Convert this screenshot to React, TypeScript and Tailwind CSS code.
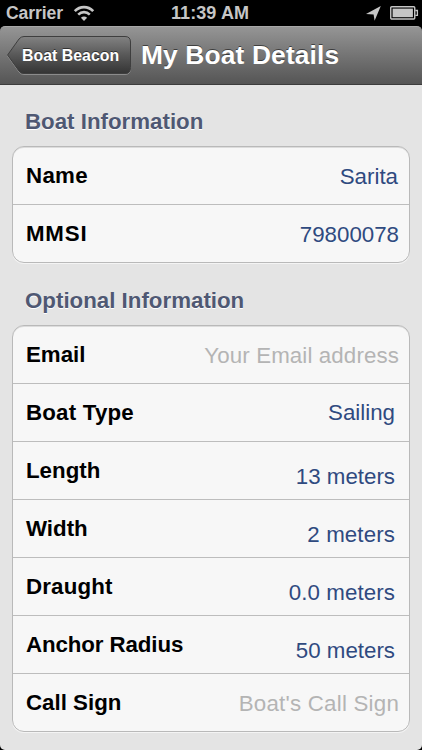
import React from 'react';
import { clsx } from 'clsx';

type Row = {
  label: string;
  value?: string;
  placeholder?: string;
  // spacing of the value and label inside their cell
  valueClass?: string;
  labelClass?: string;
};

const BOAT_ROWS: Row[] = [
  { label: 'Name', value: 'Sarita', valueClass: 'pr-[11px] pt-0.5', labelClass: 'tracking-[0.3px]' },
  { label: 'MMSI', value: '79800078', valueClass: 'pr-[10px] pt-0.5', labelClass: 'tracking-[0.8px]' },
];

const OPTIONAL_ROWS: Row[] = [
  { label: 'Email', placeholder: 'Your Email address', valueClass: 'pr-[10px] pt-0.5 tracking-[0.12px]' },
  { label: 'Boat Type', value: 'Sailing', valueClass: 'pr-[14px]', labelClass: 'tracking-[0.2px]' },
  { label: 'Length', value: '13 meters', valueClass: 'pr-[14px] pt-3' },
  { label: 'Width', value: '2 meters', valueClass: 'pr-[14px] pt-3 tracking-[0.12px]' },
  { label: 'Draught', value: '0.0 meters', valueClass: 'pr-[14px] pt-3 tracking-[0.1px]', labelClass: 'tracking-[0.15px]' },
  { label: 'Anchor Radius', value: '50 meters', valueClass: 'pr-[14px] pt-3', labelClass: 'tracking-[-0.1px]' },
  { label: 'Call Sign', placeholder: "Boat's Call Sign", valueClass: 'pr-[10px] pt-0.5 tracking-[0.22px]' },
];

function WifiIcon() {
  return (
    <svg width="22" height="17" viewBox="0 0 22 17" fill="none" stroke="#c6c6c6">
      <path d="M1.8 6.1 C7 0.7 15 0.7 20.2 6.1" strokeWidth="2.7" />
      <path d="M5.2 9.7 C8.6 6.3 13.4 6.3 16.8 9.7" strokeWidth="2.6" />
      <path d="M11 16 L7.9 12.7 C9.7 11 12.3 11 14.1 12.7 Z" fill="#c6c6c6" stroke="none" />
    </svg>
  );
}

function LocationIcon() {
  return (
    <svg width="15" height="15" viewBox="0 0 15 15" fill="#c6c6c6">
      <path d="M14.8 0 L8.6 14.8 L7.6 8.4 L0 8 Z" />
    </svg>
  );
}

function BatteryIcon() {
  return (
    <svg width="29" height="14" viewBox="0 0 29 14" fill="none">
      <rect x="0.75" y="0.75" width="24" height="12.3" rx="1" stroke="#c6c6c6" strokeWidth="1.4" />
      <rect x="2.6" y="2.6" width="20.3" height="8.6" fill="#c6c6c6" />
      <path d="M25.3 4.5 H27.4 V9.4 H25.3" stroke="#c6c6c6" strokeWidth="1.3" />
    </svg>
  );
}

function StatusBar() {
  return (
    <div className="grid h-[26px] shrink-0 grid-cols-3 items-center bg-black text-[18px] leading-[26px] font-bold text-[#c6c6c6]">
      <div className="flex items-center gap-[10px] pl-[6px]">
        <span className="text-[17.6px] tracking-[-0.1px]">Carrier</span>
        <WifiIcon />
      </div>
      <span className="pr-0.5 text-center tracking-[0.1px] whitespace-nowrap">11:39 AM</span>
      <div className="flex items-center justify-end gap-[9px] pr-[3px]">
        <LocationIcon />
        <BatteryIcon />
      </div>
    </div>
  );
}

function BackButton() {
  return (
    <button className="relative flex h-[39px] w-[125px] items-center pl-[15px] text-white">
      <svg className="absolute inset-0" width="125" height="39" viewBox="0 0 125 39" fill="none">
        <defs>
          <linearGradient id="back" x1="0" y1="0" x2="0" y2="1">
            <stop offset="0" stopColor="#828282" />
            <stop offset="0.5" stopColor="#585858" />
            <stop offset="1" stopColor="#343434" />
          </linearGradient>
        </defs>
        <path
          d="M0.6 20 L12 4 Q14 1.5 17 1.5 H118 Q123.5 1.5 123.5 7 V32.5 Q123.5 38.5 118 38.5 H17 Q14 38.5 12 36 Z"
          stroke="#969696"
          strokeOpacity="0.8"
        />
        <path
          d="M0.6 19 L12 3 Q14 0.5 17 0.5 H118 Q123.5 0.5 123.5 6 V31.5 Q123.5 37.5 118 37.5 H17 Q14 37.5 12 35 Z"
          fill="url(#back)"
          stroke="#3e3e3e"
        />
      </svg>
      <span className="relative text-[15.9px] font-bold whitespace-nowrap [text-shadow:0_-1px_0_rgba(0,0,0,0.5)]">
        Boat Beacon
      </span>
    </button>
  );
}

function NavBar() {
  return (
    <header className="flex h-[59px] shrink-0 items-center gap-[9px] rounded-t-[5px] border-t border-b border-t-[#a8a8a8] border-b-[#3c3c3c] bg-linear-to-b from-[#959595] to-[#555555] pl-[7px] shadow-[0_1px_2px_rgba(0,0,0,0.35)]">
      <BackButton />
      <h1 className="text-[26.4px] leading-none font-bold tracking-[0.12px] whitespace-nowrap text-white [text-shadow:0_-1px_0_rgba(0,0,0,0.5)]">
        My Boat Details
      </h1>
    </header>
  );
}

function Section({ title, rows, className }: { title: string; rows: Row[]; className?: string }) {
  return (
    <section className={className}>
      <h2 className="pl-[13px] text-[22.3px] leading-[26px] font-bold text-[#4f5873] [text-shadow:0_1px_0_#ffffff]">
        {title}
      </h2>
      <div className="mt-[11px] overflow-hidden rounded-[12px] border border-[#b9b9b9] bg-[#f7f7f7] shadow-[0_1px_0_#f4f4f4,inset_0_1px_0_#dcdcdc]">
        {rows.map((row, i) => (
          <div
            key={row.label}
            className={clsx(
              'flex items-center justify-between pl-[13px]',
              i === rows.length - 1 ? 'h-[57px]' : 'h-[58px] border-b border-[#bdbdbd]',
            )}
          >
            <span className={clsx('text-[22.3px] font-bold text-black', row.labelClass)}>{row.label}</span>
            <span
              className={clsx(
                'text-[22.3px] whitespace-nowrap',
                row.value ? 'text-[#2f4a80]' : 'text-[#b4b4b4]',
                row.valueClass,
              )}
            >
              {row.value ?? row.placeholder}
            </span>
          </div>
        ))}
      </div>
    </section>
  );
}

export default function App() {
  return (
    <div className="h-[750px] w-[422px] overflow-hidden bg-black font-['Liberation_Sans',Arial,sans-serif]">
      <div className="flex h-full flex-col">
        <StatusBar />
        <NavBar />
        <main className="flex-1 rounded-b-[5px] bg-[#e4e4e4] px-3 pt-6">
          <Section title="Boat Information" rows={BOAT_ROWS} />
          <Section title="Optional Information" rows={OPTIONAL_ROWS} className="mt-[25px]" />
        </main>
      </div>
    </div>
  );
}
